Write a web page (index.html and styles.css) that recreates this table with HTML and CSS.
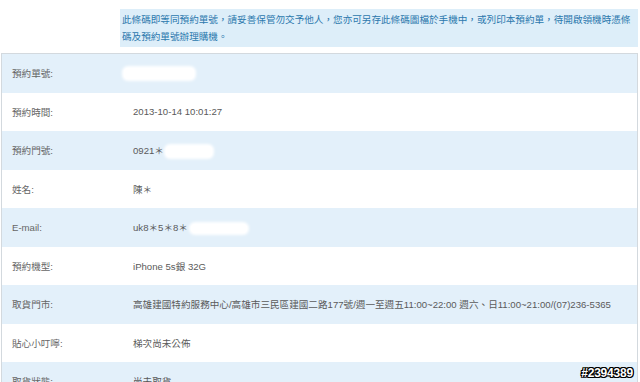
FILE: index.html
```html
<!DOCTYPE html>
<html lang="zh-Hant">
<head>
<meta charset="utf-8">
<title>預約資料</title>
<link rel="stylesheet" href="styles.css">
</head>
<body>
<div class="page">
  <div class="notice">此條碼即等同預約單號，請妥善保管勿交予他人，您亦可另存此條碼圖檔於手機中，或列印本預約單，待開啟領機時憑條碼及預約單號辦理購機。</div>
  <div class="table">
    <div class="row alt"><div class="label">預約單號:</div><div class="value"><span class="redact r1"></span></div></div>
    <div class="row"><div class="label">預約時間:</div><div class="value">2013-10-14 10:01:27</div></div>
    <div class="row alt"><div class="label">預約門號:</div><div class="value">0921＊<span class="redact r2"></span></div></div>
    <div class="row"><div class="label">姓名:</div><div class="value">陳＊</div></div>
    <div class="row alt"><div class="label">E-mail:</div><div class="value">uk8＊5＊8＊<span class="redact r3"></span></div></div>
    <div class="row"><div class="label">預約機型:</div><div class="value">iPhone 5s銀 32G</div></div>
    <div class="row alt"><div class="label">取貨門市:</div><div class="value">高雄建國特約服務中心/高雄市三民區建國二路177號/週一至週五11:00~22:00 週六、日11:00~21:00/(07)236-5365</div></div>
    <div class="row"><div class="label">貼心小叮嚀:</div><div class="value">梯次尚未公佈</div></div>
    <div class="row alt"><div class="label">取貨狀態:</div><div class="value">尚未取貨</div></div>
  </div>
  <div class="watermark">#2394389</div>
</div>
</body>
</html>
```
FILE: styles.css
```css
html, body {
  margin: 0;
  padding: 0;
  background: #ffffff;
}
body {
  font-family: "Liberation Sans", Arial, "Noto Sans CJK TC", sans-serif;
  font-size: 9.6px;
  color: #5a5a5a;
  overflow: hidden;
}
.page {
  position: relative;
  height: 382px;
  box-sizing: border-box;
  padding: 9px 2px 0 1px;
}
.notice {
  margin-left: 119px;
  background: #ddeef9;
  color: #2b78ad;
  padding: 2px 3px 2px 2px;
  line-height: 17px;
}
.table {
  margin-top: 6px;
  border: 1px solid #d3d9de;
  border-bottom: none;
}
.row {
  display: grid;
  grid-template-columns: 121px 1fr;
  align-items: center;
  height: 38.5px;
  padding-left: 10px;
  background: #ffffff;
}
.row.alt {
  background: #e3f0fa;
}
.label {
  color: #666666;
}
.value {
  color: #5a5a5a;
  white-space: nowrap;
}
.redact {
  display: inline-block;
  vertical-align: middle;
  background: #ffffff;
  border-radius: 4px;
  box-shadow: 0 0 3px 2px #ffffff;
}
.r1 {
  width: 70px;
  height: 11px;
  margin-left: -9px;
}
.r2 {
  width: 46px;
  height: 11px;
  margin-left: 2px;
}
.r3 {
  width: 56px;
  height: 9px;
  margin-left: 3px;
}
.watermark {
  position: absolute;
  right: 7px;
  top: 367px;
  font-family: "Liberation Sans", Arial, sans-serif;
  font-weight: bold;
  font-size: 12px;
  line-height: 12px;
  color: #ffffff;
  letter-spacing: -0.2px;
  text-shadow: 1px 0 0 #000, -1px 0 0 #000, 0 1px 0 #000, 0 -1px 0 #000, 1px 1px 0 #000, -1px -1px 0 #000, 1px -1px 0 #000, -1px 1px 0 #000;
}
```
